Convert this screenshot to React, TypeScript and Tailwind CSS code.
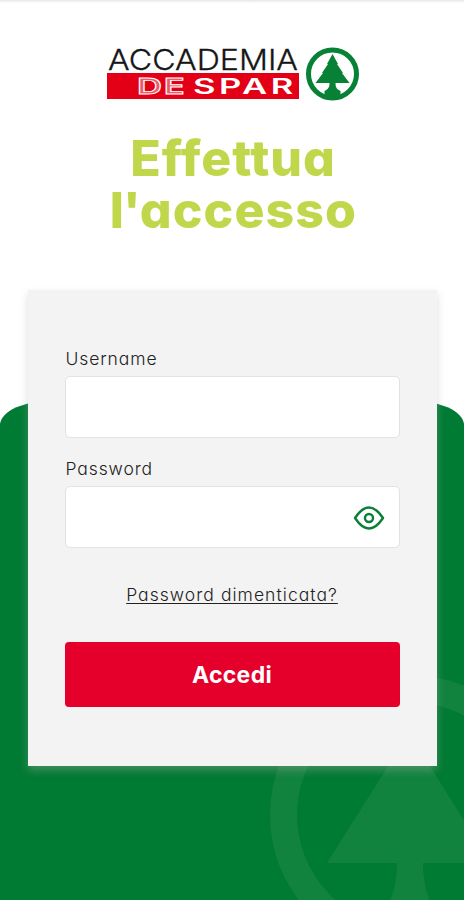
import React, { useState } from 'react';

function Logo() {
  return (
    <svg width="254" height="56" viewBox="0 0 254 56" className="block" role="img" aria-label="Accademia Despar">
      <text x="1" y="24" fontSize="29" fontWeight="300" fill="#161616" stroke="#161616" strokeWidth="0.300" textLength="190" lengthAdjust="spacingAndGlyphs" className="font-['Inter',sans-serif]">
        ACCADEMIA
      </text>
      <rect x="0" y="27" width="192" height="26" fill="#e30016" />
      <g transform="translate(30 47.500) scale(1.65 1)" className="font-['Inter',sans-serif]">
        <text fontSize="21" fontWeight="600" fill="#ec5a66" stroke="#fff" strokeWidth="0.800" letterSpacing="1">
          DE
        </text>
        <text x="34" fontSize="21" fontWeight="600" fill="#fff" letterSpacing="2.100">
          SPAR
        </text>
      </g>
      <circle cx="225.5" cy="28" r="24" fill="none" stroke="#068136" strokeWidth="5" />
      <path d="M225.500 8 231 18 230 18 236 27 235 27 242.500 37H228.500c0 4 1 6 5 8v6h-16v-6c4-2 5-4 5-8H208.500L216 27 215 27 221 18 220 18z" fill="#068136" />
    </svg>
  );
}

function EyeIcon() {
  return (
    <svg width="32" height="26" viewBox="0 0 32 26" fill="none" stroke="#0a7f35" strokeWidth="2.400" strokeLinejoin="round">
      <path d="M2 13C7 5.500 11 2.500 16 2.500S25 5.500 30 13C25 20.500 21 23.500 16 23.500S7 20.500 2 13z" />
      <circle cx="16" cy="13" r="4" />
    </svg>
  );
}

export default function App() {
  const [showPassword, setShowPassword] = useState(false);

  return (
    <main className="relative h-[900px] w-full overflow-hidden bg-white font-['Inter','Noto_Sans',sans-serif] [font-feature-settings:'cv11'] text-[#222]">
      {/* Background */}
      <div className="absolute inset-x-0 top-0 h-[3px] bg-linear-to-b from-[#e6e6e6] to-white" />
      <div className="absolute inset-x-0 top-[400px] bottom-0 overflow-hidden rounded-t-[56px_25px] bg-[#007b33]">
        <svg width="464" height="500" viewBox="0 400 464 500" className="block">
          <circle cx="410" cy="815" r="126.500" fill="none" stroke="#11833f" strokeWidth="27" />
          <path d="M409 733 491 863H423c0 14 2 27 8 40H389c6-13 8-26 8-40H327z" fill="#11833f" />
        </svg>
      </div>

      <div className="relative flex flex-col items-center pt-[46px]">
        <div className="pl-[3px]">
          <Logo />
        </div>
        <h1 className="mt-[30px] flex flex-col items-center text-[50px] leading-[52px] font-extrabold text-[#c1d74b]">
          <span className="pl-[2px] tracking-[0.900px]">Effettua</span>
          <span className="pl-[3px] tracking-[1.100px]">
            <span className="tracking-[-1px]">l'</span>accesso
          </span>
        </h1>

        <form
          onSubmit={(e) => e.preventDefault()}
          className="mt-[54px] flex h-[476px] w-[409px] flex-col bg-[#f3f3f3] px-[37px] pt-[57px] shadow-[0_4px_8px_rgba(170,170,170,0.4)]"
        >
          <label htmlFor="username" className="h-[29px] pl-px text-[17.500px] leading-[24px] font-light">
            <span className="tracking-[0.900px]">Username</span>
          </label>
          <input id="username" className="h-[62px] w-full rounded-[5px] border border-[#e2e2e2] bg-white px-4 outline-none" />

          <label htmlFor="password" className="mt-[19px] h-[29px] pl-px text-[17.500px] leading-[24px] font-light">
            <span className="tracking-[0.900px]">Password</span>
          </label>
          <div className="flex h-[62px] items-center rounded-[5px] border border-[#e2e2e2] bg-white pt-[2px] pr-[14px] pl-4">
            <input id="password" type={showPassword ? 'text' : 'password'} className="min-w-0 flex-1 outline-none" />
            <button type="button" aria-label="Mostra password" onClick={() => setShowPassword(!showPassword)}>
              <EyeIcon />
            </button>
          </div>

          <a href="#" className="mt-[35px] self-center text-[17.500px] leading-[24px] font-light tracking-[1.050px] underline decoration-1 underline-offset-2">
            Password dimenticata?
          </a>
          <button type="submit" className="mt-[35px] h-[65px] w-full rounded-[4px] bg-[#e4002b] pt-[2px] text-[23px] font-bold tracking-[0.300px] text-white">
            Accedi
          </button>
        </form>
      </div>
    </main>
  );
}
